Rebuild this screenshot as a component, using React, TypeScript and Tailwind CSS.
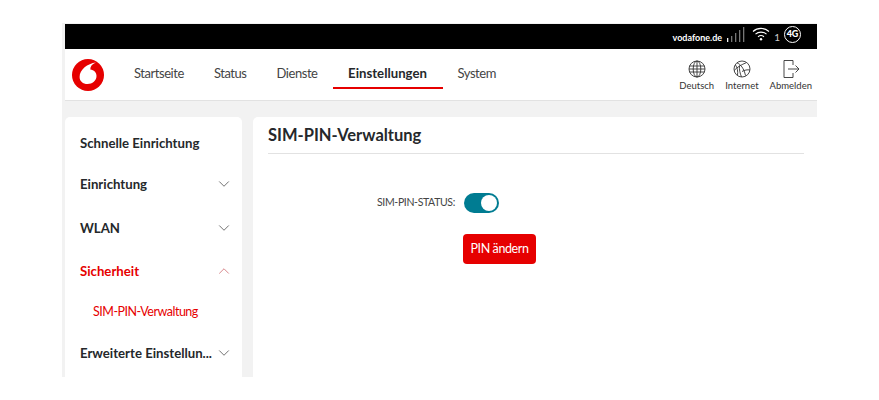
import { ChevronDown, ChevronUp } from "lucide-react";
import type { ReactNode } from "react";

const NAV = ["Startseite", "Status", "Dienste", "Einstellungen", "System"];

function VodafoneLogo() {
  return (
    <svg width="32" height="32" viewBox="0 0 32 32">
      <circle cx="16" cy="16" r="16" fill="#e60000" />
      <path
        d="M24 3.500C15.500 4.500 7.600 10.500 7.600 18c0 4.300 3.300 7 7.900 7 4.900 0 9-3.300 9-8 0-3.800-2.600-6-6.200-6.600-.1-3 1.900-5.500 5.700-6.900z"
        fill="#fff"
      />
    </svg>
  );
}

function SignalBars() {
  return (
    <svg width="18" height="16" viewBox="0 0 18 16" fill="#777">
      <rect x="0" y="11" width="1.300" height="4" fill="#f0f0f0" />
      <rect x="4" y="9" width="1.300" height="6" />
      <rect x="8" y="6" width="1.300" height="9" />
      <rect x="12" y="3" width="1.300" height="12" />
      <rect x="16" y="0" width="1.300" height="15" />
    </svg>
  );
}

function WifiIcon() {
  return (
    <svg width="18" height="14" viewBox="0 0 18 14" fill="none" stroke="#fff" strokeWidth="1.100">
      <path d="M1 4.500c4.500-4.200 11.500-4.200 16 0" />
      <path d="M3.500 7.200c3-2.800 8-2.800 11 0" />
      <path d="M6 9.800c1.700-1.500 4.300-1.500 6 0" />
      <circle cx="9" cy="12.300" r="1.200" fill="#fff" stroke="none" />
    </svg>
  );
}

function GlobeIcon() {
  return (
    <svg width="18" height="18" viewBox="0 0 18 18" fill="none" stroke="#333" strokeWidth="0.9">
      <circle cx="9" cy="9" r="8" />
      <ellipse cx="9" cy="9" rx="3.800" ry="8" />
      <path d="M9 1v16M1.600 6h14.800M1.600 12h14.800M1 9h16" />
    </svg>
  );
}

function BallIcon() {
  return (
    <svg width="18" height="18" viewBox="0 0 18 18" fill="none" stroke="#333" strokeWidth="0.9">
      <circle cx="9" cy="9" r="8" />
      <path d="M4 2.800c3.500 1.500 7 5.500 8.500 12.800" />
      <path d="M1.200 10.500C4 7 9 4.500 13 2.800" />
      <path d="M6.500 5.500c-.5 3.500.5 8 2 11.400" />
      <path d="M9 11.500c2.500-1.500 5.500-2 7.900-1.500" />
      <path d="M2.500 5c2 3 2.500 6.500 2 10" />
    </svg>
  );
}

function LogoutIcon() {
  return (
    <svg width="18" height="20" viewBox="0 0 18 20" fill="none" stroke="#333" strokeWidth="0.9">
      <path d="M11 6V1.500H2v17h9V14" />
      <path d="M6 10h11M13.500 6.500 17 10l-3.500 3.500" />
    </svg>
  );
}

function HeaderAction({ label, children }: { label: string; children: ReactNode }) {
  return (
    <div className="flex flex-col items-center">
      <div className="h-[20px] flex items-center">{children}</div>
      <span className="text-[9.500px] leading-[14px] text-[#333] whitespace-nowrap">{label}</span>
    </div>
  );
}

function SideItem({
  label,
  active,
  open,
  chevron = true,
  className,
}: {
  label: string;
  active?: boolean;
  open?: boolean;
  chevron?: boolean;
  className: string;
}) {
  return (
    <div className={`h-[18px] flex items-center justify-between pl-[15px] pr-[9px] ${className}`}>
      <span
        className={`text-[13.200px] leading-[18px] font-bold whitespace-nowrap ${
          active ? "text-[#e60000]" : "text-[#25282b]"
        }`}
      >
        {label}
      </span>
      {chevron &&
        (open ? (
          <ChevronUp size={18} strokeWidth={1.1} className="text-[#d07075]" />
        ) : (
          <ChevronDown size={18} strokeWidth={1.1} className="text-[#555]" />
        ))}
    </div>
  );
}

export default function App() {
  return (
    <div className="w-[879px] h-[400px] bg-white pt-[23px] pl-[62px] overflow-hidden font-['Lato',sans-serif]">
      <div className="w-[755px] h-[354px] pt-[1px] pl-[3px] bg-[#f2f2f2]">
        <div className="w-[752px] h-[353px] flex flex-col">
          {/* top status strip */}
          <div className="h-[25px] bg-black flex items-center justify-end pr-[16px] text-white">
            <span className="text-[9px] font-bold mt-[2px] mr-[5px]">vodafone.de</span>
            <div className="mb-[4px]">
              <SignalBars />
            </div>
            <div className="ml-[7px] mr-[4px] mb-[5px]">
              <WifiIcon />
            </div>
            <span className="text-[10px] text-[#ccc] mt-[1px] mr-[4px]">1</span>
            <span className="w-[17px] h-[17px] rounded-full border border-white flex items-center justify-center text-[9px] font-black mb-[5px]">
              4G
            </span>
          </div>

          {/* main header */}
          <div className="h-[52px] bg-white border-b border-[#e2e2e2] flex items-center pl-[7px] pr-[5px]">
            <VodafoneLogo />
            <nav className="flex ml-[15px] h-full">
              {NAV.map((item) =>
                item === "Einstellungen" ? (
                  <div
                    key={item}
                    className="relative flex items-center justify-center w-[110px] mb-[2px] text-[13.200px] font-bold text-[#25282b]"
                  >
                    {item}
                    <div className="absolute left-0 right-0 bottom-[9px] h-[2px] bg-[#e60000]" />
                  </div>
                ) : (
                  <div
                    key={item}
                    className="flex items-center px-[15px] mb-[2px] text-[13px] tracking-[-0.45px] text-[#444]"
                  >
                    {item}
                  </div>
                ),
              )}
            </nav>
            <div className="ml-auto mt-[3px] flex gap-[11px]">
              <HeaderAction label="Deutsch">
                <GlobeIcon />
              </HeaderAction>
              <HeaderAction label="Internet">
                <BallIcon />
              </HeaderAction>
              <HeaderAction label="Abmelden">
                <LogoutIcon />
              </HeaderAction>
            </div>
          </div>

          {/* body */}
          <div className="flex-1 flex min-h-0 pt-[16px] gap-[11px] bg-[#f2f2f2]">
            <aside className="w-[177px] bg-white rounded-t-[5px] overflow-hidden">
              <SideItem label="Schnelle Einrichtung" chevron={false} className="mt-[17px]" />
              <SideItem label="Einrichtung" className="mt-[23px]" />
              <SideItem label="WLAN" className="mt-[26px]" />
              <SideItem label="Sicherheit" active open className="mt-[25px]" />
              <div className="mt-[23px] pl-[28px] text-[12.500px] tracking-[-0.5px] leading-[18px] text-[#e60000]">
                SIM-PIN-Verwaltung
              </div>
              <SideItem label="Erweiterte Einstellun..." className="mt-[23px]" />
            </aside>
            <main className="flex-1 bg-white rounded-tl-[5px] pl-[15px] pr-[13px]">
              <div className="h-[37px] border-b border-[#e2e2e2] flex items-center">
                <h1 className="text-[16.500px] font-bold text-[#25282b]">SIM-PIN-Verwaltung</h1>
              </div>
              <div className="flex items-center mt-[39px] ml-[109px]">
                <span className="w-[78px] whitespace-nowrap text-[10.500px] tracking-[-0.35px] text-[#444]">
                  SIM-PIN-STATUS:
                </span>
                <div className="ml-[9px] w-[35px] h-[20px] rounded-full bg-[#007c92] flex items-center justify-end pr-[2px]">
                  <div className="w-[16px] h-[16px] rounded-full bg-white" />
                </div>
              </div>
              <button className="block mt-[21px] ml-[195px] w-[73px] h-[30px] rounded-[4px] bg-[#e60000] text-white text-[12.500px] tracking-[-0.4px]">
                PIN ändern
              </button>
            </main>
          </div>
        </div>
      </div>
    </div>
  );
}
